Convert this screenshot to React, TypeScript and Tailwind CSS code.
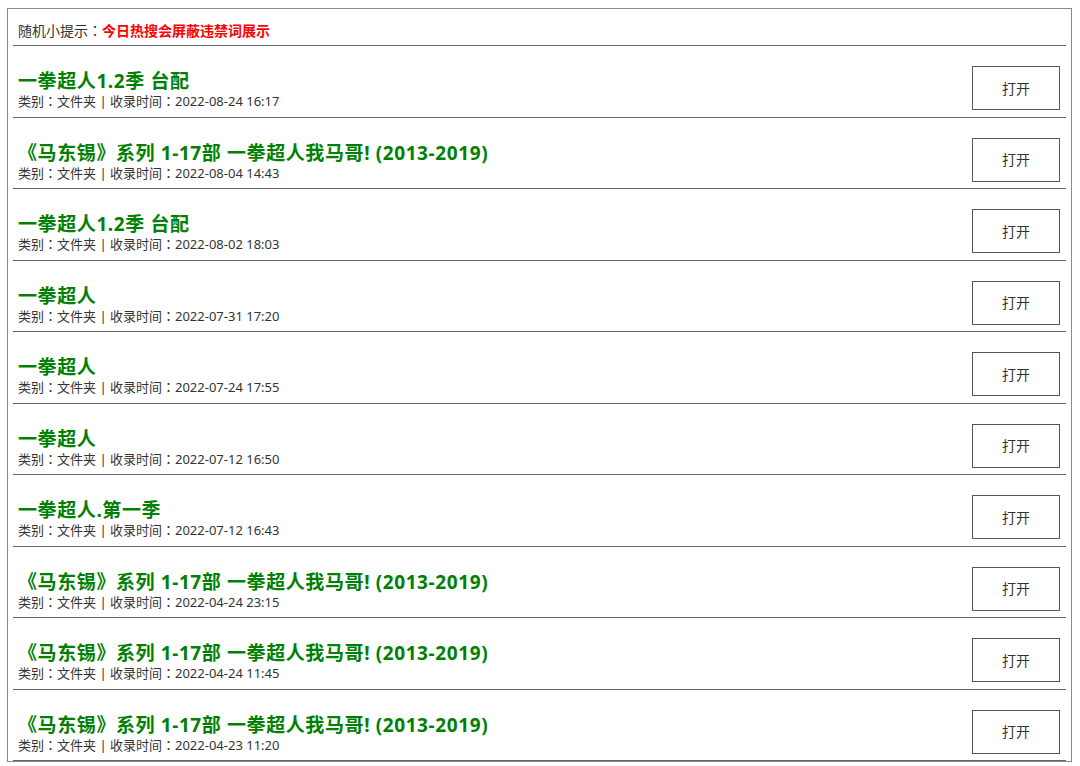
import React from 'react';

const rows = [
  { title: '一拳超人1.2季 台配', time: '2022-08-24 16:17' },
  { title: '《马东锡》系列 1-17部 一拳超人我马哥! (2013-2019)', time: '2022-08-04 14:43' },
  { title: '一拳超人1.2季 台配', time: '2022-08-02 18:03' },
  { title: '一拳超人', time: '2022-07-31 17:20' },
  { title: '一拳超人', time: '2022-07-24 17:55' },
  { title: '一拳超人', time: '2022-07-12 16:50' },
  { title: '一拳超人.第一季', time: '2022-07-12 16:43' },
  { title: '《马东锡》系列 1-17部 一拳超人我马哥! (2013-2019)', time: '2022-04-24 23:15' },
  { title: '《马东锡》系列 1-17部 一拳超人我马哥! (2013-2019)', time: '2022-04-24 11:45' },
  { title: '《马东锡》系列 1-17部 一拳超人我马哥! (2013-2019)', time: '2022-04-23 11:20' },
];

// centred full-width colon, as the source font draws it
const Colon = () => <span style={{ fontFamily: '"Noto Sans CJK TC", sans-serif' }}>：</span>;

export default function App() {
  return (
    <div
      className="bg-white h-[766px] overflow-hidden text-[#333]"
      style={{ fontFamily: '"Noto Sans", "Noto Sans CJK SC", sans-serif' }}
    >
      <div className="ml-[7px] mt-[8px] w-[1065px] border border-[#888] px-[5px]">
        <div className="h-[37px] border-b border-[#666] flex items-end pb-[4px] pl-[5px] text-[14px] leading-[20px]">
          <span className="text-[#333]">随机小提示<Colon /></span>
          <span className="text-[#ff0000] font-bold">今日热搜会屏蔽违禁词展示</span>
        </div>
        {rows.map((r, i) => (
          <div
            key={i}
            className="h-[71.5px] border-b border-[#666] flex items-start justify-between pl-[5px] pr-[6px]"
          >
            <div className="mt-[24px]">
              <div className="text-[19px] leading-[23px] font-bold tracking-[0.6px] text-[#008000]">
                {r.title}
              </div>
              <div className="text-[13px] leading-[16px] text-[#333]">
                类别<Colon />文件夹 | 收录时间<Colon />{r.time}
              </div>
            </div>
            <button className="mt-[20px] w-[88px] h-[44px] border border-[#555] bg-white text-[14px] text-[#333]">
              打开
            </button>
          </div>
        ))}
      </div>
    </div>
  );
}
